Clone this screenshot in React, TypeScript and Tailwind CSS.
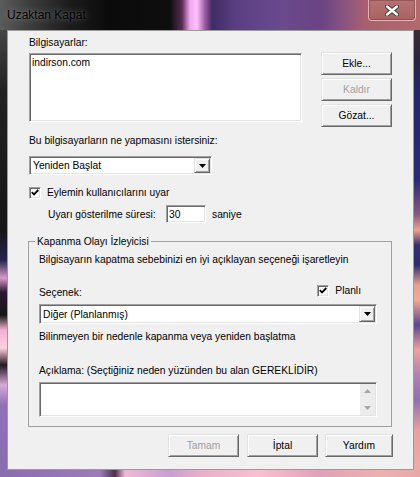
import React from "react";

const sunken =
  "border border-t-[#a0a0a0] border-l-[#a0a0a0] border-r-white border-b-white shadow-[inset_1px_1px_0_#696969,inset_-1px_-1px_0_#e3e3e3]";
const raised =
  "border border-t-[#e3e3e3] border-l-[#e3e3e3] border-r-[#696969] border-b-[#696969] shadow-[inset_1px_1px_0_#ffffff,inset_-1px_-1px_0_#a0a0a0]";

function Button({ label, w, disabled }: { label: string; w: string; disabled?: boolean }) {
  return (
    <div
      className={`${raised} ${w} h-[23px] shrink-0 bg-[#f0f0f0] flex items-center justify-center ${
        disabled ? "text-[#a0a0a0]" : "text-black"
      }`}
    >
      {label}
    </div>
  );
}

function Check() {
  return (
    <div className={`${sunken} w-[12px] h-[12px] shrink-0 bg-white flex items-center justify-center`}>
      <svg width="8" height="7" viewBox="0 0 8 7">
        <path d="M0.8 3.2 L3 5.4 L7.3 1" fill="none" stroke="#000" strokeWidth="1.8" />
      </svg>
    </div>
  );
}

function Combo({ text, w, h }: { text: string; w: string; h: string }) {
  return (
    <div className={`${sunken} ${w} ${h} bg-white flex items-center p-[1px]`}>
      <span className="flex-1 pl-[2px] whitespace-nowrap">{text}</span>
      <div className={`${raised} w-[16px] h-full bg-[#f0f0f0] flex items-center justify-center`}>
        <svg width="7" height="4" viewBox="0 0 7 4">
          <polygon points="0,0 7,0 3.5,4" fill="#000" />
        </svg>
      </div>
    </div>
  );
}

export default function App() {
  return (
    <div className="w-[420px] h-[477px] flex flex-col overflow-hidden font-['Liberation_Sans',Arial,sans-serif] text-[10.25px] leading-[13px] text-black">
      {/* Title bar */}
      <div className="h-[30px] shrink-0 flex items-start bg-[linear-gradient(90deg,#5b5b5b_0px,#3d3d3d_30px,#1b1b1b_70px,#0b0b0b_110px,#0e0e0e_170px,#5a2a55_182px,#f0a8ee_190px,#ffc0ff_197px,#9a5aa0_205px,#3e2c64_212px,#5a3e82_235px,#6a4a8e_280px,#6a4484_320px,#8a5480_345px,#a86070_365px,#b26a6c_420px)]">
        <div className="pl-[7px] pt-[8px] text-[12px] leading-[15px] text-black [text-shadow:0_0_9px_rgba(255,255,255,0.35),0_0_3px_rgba(255,255,255,0.2)]">
          Uzaktan Kapat
        </div>
        <div className="ml-auto mr-[4px] w-[48px] h-[21px] rounded-b-[4px] border border-t-0 border-[#e6b4b4] bg-[linear-gradient(180deg,#b67272,#a86262)] shadow-[inset_0_0_0_1px_rgba(90,40,40,0.35)] flex items-center justify-center">
          <svg width="14" height="11" viewBox="0 0 14 11">
            <path d="M2 1.5 L12 9.5 M12 1.5 L2 9.5" stroke="#3a3a3a" strokeWidth="4.2" strokeLinecap="round" />
            <path d="M2 1.5 L12 9.5 M12 1.5 L2 9.5" stroke="#ffffff" strokeWidth="2.4" strokeLinecap="round" />
          </svg>
        </div>
      </div>

      <div className="flex flex-1">
        {/* Left frame */}
        <div className="w-[7px] bg-[linear-gradient(180deg,#454545_0px,#222222_60px,#161616_200px,#23234e_230px,#d89ac8_248px,#2a1a30_262px,#141414_285px,#f2b0d0_300px,#ffd0e0_318px,#201820_335px,#d8a8d8_355px,#9070b8_375px,#8a6cb0_440px)]" />

        {/* Client area */}
        <div className="w-[407px] h-[440px] bg-[#f0f0f0] border border-[#9a9a9a] flex flex-col">
          {/* Row 1 */}
          <div className="flex pt-[5px]">
            <div className="ml-[21px] w-[273px] flex flex-col">
              <div className="h-[13px]">Bilgisayarlar:</div>
              <div className={`${sunken} mt-[4px] h-[69px] bg-white pl-[2px] pt-[2px]`}>indirson.com</div>
            </div>
            <div className="ml-[19px] mt-[16px] flex flex-col gap-[3px]">
              <Button label="Ekle..." w="w-[71px]" />
              <Button label="Kaldır" w="w-[71px]" disabled />
              <Button label="Gözat..." w="w-[71px]" />
            </div>
          </div>

          <div className="ml-[21px] mt-[7px] h-[13px]">Bu bilgisayarların ne yapmasını istersiniz:</div>
          <div className="ml-[21px] mt-[9px]">
            <Combo text="Yeniden Başlat" w="w-[183px]" h="h-[19px]" />
          </div>

          <div className="ml-[21px] mt-[11px] h-[13px] flex items-center gap-[6px]">
            <Check />
            <span>Eylemin kullanıcılarını uyar</span>
          </div>

          <div className="mt-[6px] h-[18px] flex items-center">
            <span className="ml-[40px] w-[118px]">Uyarı gösterilme süresi:</span>
            <div className={`${sunken} w-[40px] h-[18px] bg-white pl-[2px] flex items-center`}>30</div>
            <span className="ml-[6px]">saniye</span>
          </div>

          {/* Group box */}
          <fieldset className="mt-[12px] ml-[20px] w-[364px] border border-[#a0a0a0]">
            <legend className="ml-[6px] px-[2px] h-[13px] leading-[13px]">Kapanma Olayı İzleyicisi</legend>
            <div className="pl-[10px] pr-[14px] pb-[9px] flex flex-col">
              <div className="mt-[5px] h-[13px] whitespace-nowrap">
                Bilgisayarın kapatma sebebinizi en iyi açıklayan seçeneği işaretleyin
              </div>
              <div className="mt-[18px] h-[15px] flex items-start">
                <span className="pt-[2px]">Seçenek:</span>
                <div className="ml-auto mr-[16px] flex items-center gap-[6px]">
                  <Check />
                  <span>Planlı</span>
                </div>
              </div>
              <div className="mt-[5px]">
                <Combo text="Diğer (Planlanmış)" w="w-[338px]" h="h-[20px]" />
              </div>
              <div className="mt-[6px] h-[13px] whitespace-nowrap">
                Bilinmeyen bir nedenle kapanma veya yeniden başlatma
              </div>
              <div className="mt-[21px] h-[13px] whitespace-nowrap">
                Açıklama: (Seçtiğiniz neden yüzünden bu alan GEREKLİDİR)
              </div>
              <div className={`${sunken} mt-[5px] w-[338px] h-[35px] bg-white flex justify-end p-[1px]`}>
                <div className="w-[15px] h-full bg-[#ececec] flex flex-col items-center justify-between py-[5px]">
                  <svg width="7" height="4" viewBox="0 0 7 4">
                    <polygon points="0,4 7,4 3.5,0" fill="#a8a8a8" />
                  </svg>
                  <svg width="7" height="4" viewBox="0 0 7 4">
                    <polygon points="0,0 7,0 3.5,4" fill="#a8a8a8" />
                  </svg>
                </div>
              </div>
            </div>
          </fieldset>

          {/* Bottom buttons */}
          <div className="mt-[7px] flex justify-end pr-[20px]">
            <Button label="Tamam" w="w-[71px]" disabled />
            <div className="ml-[8px]">
              <Button label="İptal" w="w-[71px]" />
            </div>
            <div className="ml-[7px]">
              <Button label="Yardım" w="w-[68px]" />
            </div>
          </div>
        </div>

        {/* Right frame */}
        <div className="w-[6px] bg-[linear-gradient(180deg,#3a2a30_0px,#2a2440_30px,#25256a_60px,#2a2a78_150px,#8a5a80_185px,#f0a090_200px,#38306e_215px,#2c2c70_235px,#e8a090_255px,#f4a898_270px,#5a4890_295px,#f0a0a0_320px,#b080b0_345px,#9070b0_370px,#e8a0a0_400px,#f0aaa8_440px)]" />
      </div>

      {/* Bottom frame */}
      <div className="h-[7px] shrink-0 bg-[linear-gradient(90deg,#8a6cb0_0px,#a07ab8_100px,#4a3050_115px,#f0b8d8_125px,#c8a0d0_170px,#e8b0c8_200px,#f8c0d0_260px,#e0a0b8_320px,#f0b0b0_380px,#e8a8a8_420px)]" />
    </div>
  );
}
